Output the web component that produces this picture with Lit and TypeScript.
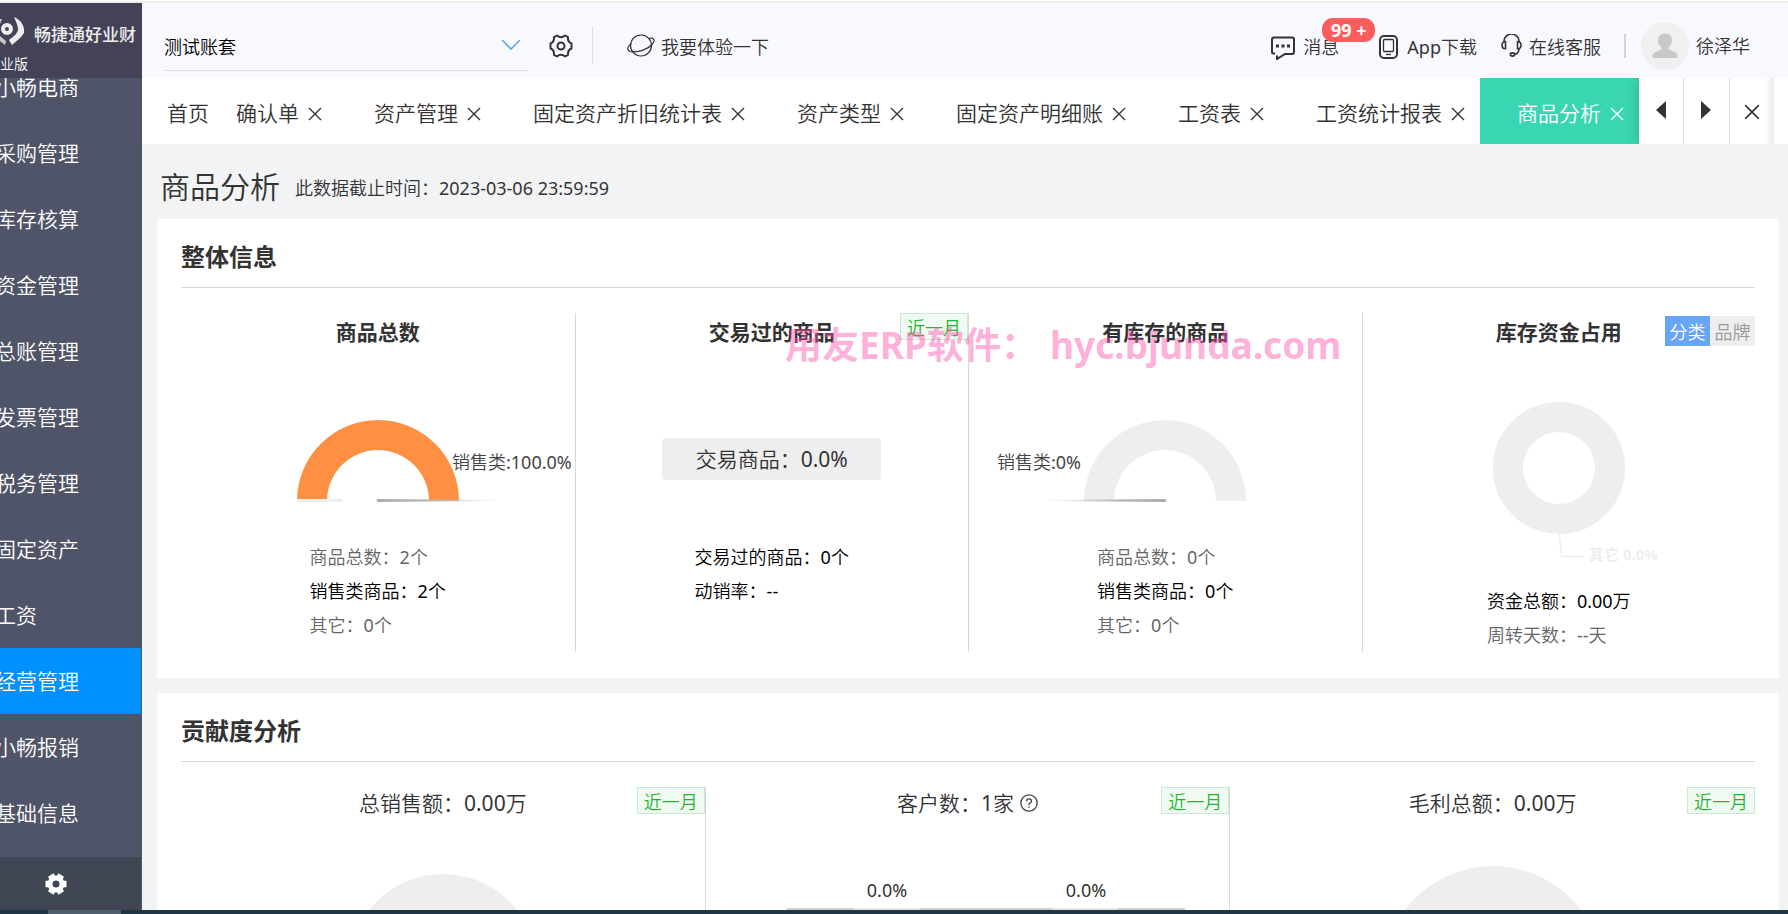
import { LitElement, html, svg, css, nothing } from "lit";
import { customElement, property, state } from "lit/decorators.js";
import { classMap } from "lit/directives/class-map.js";

const base = css`
  *, *::before, *::after { box-sizing: border-box; }
  ul { list-style: none; margin: 0; padding: 0; }
  h1, h2, h3, p { margin: 0; }
  button { font: inherit; color: inherit; background: none; border: 0; margin: 0; padding: 0; cursor: pointer; }
  a { color: inherit; text-decoration: none; }
  svg { display: block; flex: none; }
  .heavy { font-family: "Noto Sans", "Noto Sans CJK SC", sans-serif; font-weight: 700; }
`;

const cross = (size: number) => svg`<svg width=${size} height=${size} viewBox="0 0 14 14" aria-hidden="true">
  <path d="M1 1 13 13M13 1 1 13" fill="none" stroke="currentColor" stroke-width="1.4"/></svg>`;

@customElement("side-nav")
class SideNav extends LitElement {
  static styles = [base, css`
    :host { display: flex; flex-direction: column; width: 142px; flex: none; background: #4f5468; color: #fff; min-height: 0; }
    .brand { height: 75px; flex: none; background: #444256; overflow: hidden; }
    .logo { display: flex; align-items: center; gap: 10px; height: 51px; padding-top: 4px; }
    .name { font-family: "Noto Sans", "Noto Sans CJK SC", sans-serif; font-size: 17px; line-height: 24px; padding-top: 8px; font-weight: 500; white-space: nowrap; color: #eee; }
    .edition { font-size: 14px; line-height: 20px; }
    .menu { flex: 1; min-height: 0; overflow: hidden; display: flex; flex-direction: column; }
    .menu ul { margin-top: -24px; }
    .link { display: block; width: 141px; height: 66px; line-height: 66px; font-size: 21px; white-space: nowrap; overflow: hidden; }
    .link span { margin-left: -5px; }
    .link.on { background: #0090ff; }
    .foot { height: 53px; flex: none; width: 141px; background: #404553; display: flex; align-items: center; padding-left: 45px; }
  `];
  @state() current = "经营管理";
  items = ["小畅电商", "采购管理", "库存核算", "资金管理", "总账管理", "发票管理", "税务管理", "固定资产", "工资", "经营管理", "小畅报销", "基础信息"];
  render() {
    return html`
      <div class="brand">
        <div class="logo">
          <svg width="24" height="30" viewBox="0 0 24 30" aria-hidden="true">
            <circle cx="7" cy="13" r="4" fill="none" stroke="#f0f0f2" stroke-width="4"/>
            <path d="M14 1C21 4 25 10 24 17 21 22 16 25 12 29L9 24C13 21 17 18 18 14 18 9 16 6 14 1Z" fill="#ececf0"/>
            <path d="M0 20 6 25 5 29 0 25ZM0 3 2 3 0 8Z" fill="#c8c8d0"/>
          </svg>
          <span class="name">畅捷通好业财</span>
        </div>
        <div class="edition">业版</div>
      </div>
      <nav class="menu"><ul>
        ${this.items.map((t) => html`<li><a href="#" class=${classMap({ link: true, on: t === this.current })}
          @click=${(e: Event) => { e.preventDefault(); this.current = t; }}><span>${t}</span></a></li>`)}
      </ul></nav>
      <div class="foot">
        <button aria-label="设置">
          <svg width="22" height="22" viewBox="0 0 22 22" aria-hidden="true">
            <circle cx="11" cy="11" r="8.500" fill="#fff"/>
            <path d="M.5 11H21.500M5.750 2 16.250 20M16.250 2 5.750 20" stroke="#fff" stroke-width="6.500"/>
            <circle cx="11" cy="11" r="3.500" fill="#404553"/>
          </svg>
        </button>
      </div>`;
  }
}

@customElement("top-bar")
class TopBar extends LitElement {
  static styles = [base, css`
    :host { display: flex; justify-content: space-between; height: 75px; flex: none; background: #f8f9fe; color: #333; font-size: 18px; line-height: 26px; white-space: nowrap; }
    .left, .right { display: flex; align-items: flex-start; }
    .book { position: relative; width: 365px; margin-left: 22px; height: 68px; padding-top: 20px; border-bottom: 1px solid #dcdde1; }
    .book select { appearance: none; width: 100%; height: 48px; border: 0; padding: 0; background: none; font: inherit; color: #000; outline: 0; }
    .chev { position: absolute; right: 8px; top: 36px; pointer-events: none; }
    .gear { margin: 31px 0 0 20px; }
    .rule { width: 1px; height: 38px; margin: 23px 0 0 19px; background: #dcdde1; }
    .item { display: flex; align-items: center; height: 26px; margin-top: 31px; position: relative; }
    .try { margin-left: 34px; gap: 6px; }
    .msg { gap: 8px; }
    .app { gap: 9px; margin-left: 40px; }
    .help { gap: 7px; margin-left: 24px; }
    .badge { position: absolute; left: 51px; top: -16px; width: 53px; height: 24px; border-radius: 11px; background: #ff5c5e; color: #fff; line-height: 24px; text-align: center; }
    .bar { width: 2px; height: 24px; background: #d2d3d6; margin: 31px 15px 0 23px; }
    .user { display: flex; align-items: center; gap: 7px; margin: 19px 38px 0 0; height: 48px; }
  `];
  render() {
    return html`
      <div class="left">
        <div class="book">
          <select aria-label="账套"><option>测试账套</option></select>
          <svg class="chev" width="20" height="12" viewBox="0 0 20 12" aria-hidden="true"><path d="M1 1 10 10 19 1" fill="none" stroke="#68a5f5" stroke-width="1.600"/></svg>
        </div>
        <button class="gear" aria-label="系统设置">
          <svg width="24" height="24" viewBox="0 0 24 24" fill="none" stroke="#333" stroke-width="2" stroke-linejoin="round" aria-hidden="true">
            <path d="M8 1.500Q12 5 16 1.500L19 3.200Q18.500 8 22.500 9.500V14.500Q18.500 16 19 20.800L16 22.500Q12 19 8 22.500L5 20.800Q5.500 16 1.500 14.500V9.500Q5.500 8 5 3.200Z"/><circle cx="12" cy="12" r="3.500"/>
          </svg>
        </button>
        <div class="rule"></div>
        <a class="item try" href="#">
          <svg width="28" height="26" viewBox="0 0 28 26" fill="none" stroke="#333" stroke-width="1.200" aria-hidden="true">
            <circle cx="14" cy="11.500" r="10.500"/>
            <path d="M4.500 9.500C0 12.500-.5 16 3 17.500 9 19 20 16 25.500 10 29 5.500 26 3.500 22 4.500"/>
          </svg>
          <span>我要体验一下</span>
        </a>
      </div>
      <div class="right">
        <a class="item msg" href="#">
          <svg width="24" height="26" viewBox="0 0 24 26" fill="none" stroke="#333" stroke-width="2" aria-hidden="true">
            <path d="M4 19.500H2.500Q1 19.500 1 18V5.500Q1 3.500 3 3.500H21Q23 3.500 23 5.500V18Q23 20 21 20H14L6 25V21.500"/>
            <path d="M5 12h3M10.500 12h3M16 12h3" stroke-width="3"/>
          </svg>
          <span>消息</span><span class="badge heavy">99 +</span>
        </a>
        <a class="item app" href="#">
          <svg width="19" height="26" viewBox="0 0 19 26" fill="none" stroke="#333" aria-hidden="true">
            <rect x="1" y="2" width="17" height="22" rx="4" stroke-width="2"/>
            <rect x="4.500" y="5.500" width="10" height="12" rx="1" stroke-width="1.300"/><path d="M7 20.500h5" stroke-width="1.300"/>
          </svg>
          <span>App下载</span>
        </a>
        <a class="item help" href="#">
          <svg width="21" height="26" viewBox="0 0 21 26" fill="none" stroke="#333" stroke-width="1.600" aria-hidden="true">
            <path d="M3 8V7A7.500 7 0 0 1 18 7V8M18 14.500Q18 19.500 13.500 20.500"/>
            <path d="M4.500 7.500Q1 7.500 1 11.200 1 14.800 4.500 14.800ZM16.500 7.500Q20 7.500 20 11.200 20 14.800 16.500 14.800Z"/><ellipse cx="11.500" cy="20.500" rx="2.200" ry="1.600"/>
          </svg>
          <span>在线客服</span>
        </a>
        <div class="bar"></div>
        <a class="user" href="#">
          <svg width="48" height="48" viewBox="0 0 48 48" aria-hidden="true">
            <circle cx="24" cy="24" r="24" fill="#f0f0f0"/>
            <path fill="#c8c8c8" d="M24 11.500C28 11.500 31 14 31 18.500 31 22 29 24 27.500 26V27.500C31 29 36 30 36.500 33.500V36H11.500V33.500C12 30 17 29 20.500 27.500V26C19 24 17 22 17 18.500 17 14 20 11.500 24 11.500Z"/>
          </svg>
          <span>徐泽华</span>
        </a>
      </div>`;
  }
}

@customElement("tab-strip")
class TabStrip extends LitElement {
  static styles = [base, css`
    :host { display: flex; height: 66px; flex: none; background: #fff; color: #333; font-size: 21px; line-height: 30px; white-space: nowrap; }
    .tabs { display: flex; flex: 1; min-width: 0; overflow: hidden; }
    .home { display: flex; align-items: center; padding-left: 25px; width: 57px; flex: none; }
    .label { padding-top: 4px; flex: none; }
    .tab { display: flex; align-items: center; flex: none; padding: 0 15px 0 37px; gap: 9px; }
    .close { display: flex; padding-top: 5px; }
    .tab.on { background: #3ad6b2; color: #fff; }
    .ctrl { display: flex; flex: none; margin-right: 14px; width: 135px; box-shadow: 0 0 14px rgba(0, 0, 0, 0.2); clip-path: inset(0 0 0 -14px); position: relative; background: #fff; }
    .ctrl button { flex: 1; display: flex; justify-content: center; align-items: center; padding-bottom: 2px; }
    .ctrl button + button { border-left: 1px solid #dcdcdc; }
    .ctrl button:last-child { background: linear-gradient(270deg, #ececec, #fff 10px); padding: 2px 0 0; }
  `];
  @state() current = "商品分析";
  tabs = ["确认单", "资产管理", "固定资产折旧统计表", "资产类型", "固定资产明细账", "工资表", "工资统计报表", "商品分析"];
  render() {
    return html`
      <div class="tabs">
        <div class="home"><button class="label">首页</button></div>
        ${this.tabs.map((t) => html`<div class=${classMap({ tab: true, on: t === this.current })}>
          <button class="label" @click=${() => (this.current = t)}>${t}</button>
          <button class="close" aria-label="关闭${t}">${cross(14)}</button>
        </div>`)}
      </div>
      <div class="ctrl">
        <button aria-label="向左"><svg width="10" height="18" viewBox="0 0 10 18"><path d="M10 0V18L0 9Z" fill="#333"/></svg></button>
        <button aria-label="向右"><svg width="10" height="18" viewBox="0 0 10 18"><path d="M0 0V18L10 9Z" fill="#333"/></svg></button>
        <button aria-label="全部关闭">${cross(16)}</button>
      </div>`;
  }
}

@customElement("half-gauge")
class HalfGauge extends LitElement {
  static styles = [base, css`
    :host { display: flex; justify-content: center; }
    text { font-size: 18px; fill: #444; }
  `];
  @property({ type: Boolean }) full = false;
  @property() label = "";
  render() {
    return html`<svg width="392" height="192" viewBox="0 -1 392 192" role="img" aria-label=${this.label}>
      <defs><linearGradient id="n" x1="0" x2="1"><stop offset="0" stop-color="#aaa"/><stop offset=".4" stop-color="#b8b8b8"/><stop offset="1" stop-color="#ccc" stop-opacity="0"/></linearGradient></defs>
      <path d="M115 152A81 81 0 0 1 277 152H247A51 51 0 0 0 145 152Z" fill=${this.full ? "#ff8f42" : "#eee"}/>
      ${this.full ? svg`<rect x="115" y="150" width="45" height="3" fill="#eee"/>` : nothing}
      <g transform=${this.full ? "" : "translate(392 0) scale(-1 1)"}><path d="M196 150 318 151V152L196 153Q193 151.500 196 150Z" fill="url(#n)"/></g>
      <text x=${this.full ? 270 : 112} y="120" text-anchor=${this.full ? "start" : "end"}>${this.label}</text>
    </svg>`;
  }
}

@customElement("overview-card")
class OverviewCard extends LitElement {
  static styles = [base, css`
    :host { display: block; position: relative; background: #fff; padding: 0 24px 26px; color: #333; }
    h2 { font-size: 24px; line-height: 32px; padding: 22px 0 14px; border-bottom: 1px solid #d6dada; }
    .cols { display: grid; grid-template-columns: repeat(4, 1fr); margin-top: 25px; }
    .col { position: relative; min-height: 339px; padding-top: 3px; border-left: 1px solid #d8d8d8; min-width: 0; }
    .col:first-child { border: 0; }
    h3 { font-size: 21px; line-height: 32px; text-align: center; }
    .facts { width: fit-content; margin: 0 auto; font-size: 18px; line-height: 34px; color: #666; white-space: nowrap; }
    .facts .strong { color: #000; }
    .tag { position: absolute; right: 0; top: 0; height: 27px; width: 68px; border: 1px solid #c5ecce; background: #f0f9f2; color: #1eb82e; font-size: 18px; line-height: 22px; padding-top: 3px; }
    .switch { position: absolute; right: 0; top: 3px; display: flex; font-size: 18px; line-height: 28px; }
    .switch button { width: 45px; height: 30px; padding-top: 2px; background: #eee; color: #999; }
    .switch .on { background: #68a5f5; color: #fff; }
    .mid { height: 192px; padding-top: 90px; display: flex; justify-content: center; align-items: flex-start; }
    .pill { width: 219px; height: 42px; border-radius: 4px; background: #eee; font-size: 21px; line-height: 42px; text-align: center; }
    .donut { display: flex; justify-content: center; }
    .donut text { font-size: 15px; fill: #eee; }
    .mark { position: absolute; left: 628px; top: 104px; display: flex; align-items: baseline; gap: 12px; font-size: 37px; line-height: 44px; color: rgba(255, 80, 170, 0.46); white-space: nowrap; pointer-events: none; }
  `];
  @state() mode = "分类";
  render() {
    return html`
      <h2 class="heavy">整体信息</h2>
      <div class="cols">
        <div class="col">
          <h3 class="heavy">商品总数</h3>
          <half-gauge full label="销售类:100.0%"></half-gauge>
          <ul class="facts"><li>商品总数：2个</li><li class="strong">销售类商品：2个</li><li>其它：0个</li></ul>
        </div>
        <div class="col">
          <h3 class="heavy">交易过的商品</h3>
          <button class="tag">近一月</button>
          <div class="mid"><div class="pill">交易商品：0.0%</div></div>
          <ul class="facts"><li class="strong">交易过的商品：0个</li><li class="strong">动销率：--</li></ul>
        </div>
        <div class="col">
          <h3 class="heavy">有库存的商品</h3>
          <half-gauge label="销售类:0%"></half-gauge>
          <ul class="facts"><li>商品总数：0个</li><li class="strong">销售类商品：0个</li><li>其它：0个</li></ul>
        </div>
        <div class="col">
          <h3 class="heavy">库存资金占用</h3>
          <div class="switch">${["分类", "品牌"].map((m) => html`<button class=${classMap({ on: m === this.mode })} @click=${() => (this.mode = m)}>${m}</button>`)}</div>
          <div class="donut">
            <svg width="392" height="236" viewBox="0 -1 392 236">
              <circle cx="196" cy="119" r="51" fill="none" stroke="#eee" stroke-width="30"/>
              <path d="M196 185 199 207.500H221" fill="none" stroke="#eee" stroke-width="1.500"/>
              <text class="heavy" x="226" y="211">其它 0.0%</text>
            </svg>
          </div>
          <ul class="facts"><li class="strong">资金总额：0.00万</li><li>周转天数：--天</li></ul>
        </div>
      </div>
      <div class="mark heavy"><span>用友ERP软件：</span><span>hyc.bjunda.com</span></div>`;
  }
}

@customElement("share-card")
class ShareCard extends LitElement {
  static styles = [base, css`
    :host { display: flex; flex-direction: column; background: #fff; padding: 0 24px; color: #333; overflow: hidden; min-height: 0; }
    h2 { font-size: 24px; line-height: 32px; padding: 22px 0 14px; border-bottom: 1px solid #d6dada; flex: none; }
    .cols { display: grid; grid-template-columns: repeat(3, 1fr); margin-top: 25px; flex: none; height: 339px; }
    .col { position: relative; border-right: 1px solid #d8d8d8; min-width: 0; }
    .col:last-child { border: 0; }
    h3 { display: flex; justify-content: center; align-items: center; gap: 6px; font-size: 21px; line-height: 32px; font-weight: inherit; }
    .tag { position: absolute; right: 0; top: 0; height: 27px; width: 68px; border: 1px solid #c5ecce; background: #f0f9f2; color: #1eb82e; font-size: 18px; line-height: 22px; padding-top: 3px; }
    .ring { display: flex; justify-content: center; padding-top: 55px; }
    .ring.big { padding-top: 47px; }
    .bars { display: grid; grid-template-columns: 1fr 1fr; width: 398px; margin: 57px auto 0; font-size: 18px; line-height: 28px; text-align: center; }
    .mid { padding-left: 38px; }
    .bar { height: 60px; margin-top: 4px; background: linear-gradient(90deg, #ccd0cf 67px, #e4e4e4 67px 133px, #ccd0cf 133px); }
    .bar.rev { background: linear-gradient(90deg, #ccd0cf 66px, #e4e4e4 66px 132px, #ccd0cf 132px); }
  `];
  ring(r: number) {
    return html`<svg width=${r * 2} height=${r * 2} viewBox="0 0 ${r * 2} ${r * 2}"><circle cx=${r} cy=${r} r=${r - 22} fill="none" stroke="#eee" stroke-width="44"/></svg>`;
  }
  render() {
    return html`
      <h2 class="heavy">贡献度分析</h2>
      <div class="cols">
        <div class="col"><h3>总销售额：0.00万</h3><button class="tag">近一月</button><div class="ring">${this.ring(94)}</div></div>
        <div class="col">
          <h3>客户数：1家
            <svg width="18" height="18" viewBox="0 0 18 18" fill="none" stroke="#444" stroke-width="1.300" aria-label="说明"><circle cx="9" cy="9" r="8.200"/><path d="M6.500 7.200Q6.500 4.800 9 4.800T11.500 7Q11.500 8.200 10.200 8.800T9 10.500V11M9 12.300V13.700"/></svg>
          </h3>
          <button class="tag">近一月</button>
          <div class="mid"><div class="bars"><div>0.0%<div class="bar"></div></div><div>0.0%<div class="bar rev"></div></div></div></div>
        </div>
        <div class="col"><h3>毛利总额：0.00万</h3><button class="tag">近一月</button><div class="ring big">${this.ring(110)}</div></div>
      </div>`;
  }
}

@customElement("app-root")
class AppRoot extends LitElement {
  static styles = [base, css`
    :host { display: flex; flex-direction: column; height: 100vh; overflow: hidden; font-family: "Noto Sans", "Noto Sans CJK SC DemiLight", "Noto Sans CJK SC", sans-serif; font-weight: 400; background: #f2f3f5; color: #333; }
    .edge { height: 3px; flex: none; background: #eee; border-top: 1px solid #fff; }
    .body { display: flex; flex: 1; min-height: 0; }
    .main { display: flex; flex-direction: column; flex: 1; min-width: 0; min-height: 0; }
    .page { display: flex; flex-direction: column; flex: 1; min-height: 0; padding: 0 9px 0 15px; overflow: hidden; }
    .title { display: flex; align-items: center; gap: 15px; height: 75px; flex: none; padding: 10px 0 0 3px; white-space: nowrap; }
    .title h1 { font-size: 30px; line-height: 44px; font-weight: inherit; }
    .title span { font-size: 18px; }
    overview-card { flex: none; margin-bottom: 15px; }
    share-card { flex: 1; }
    .dock { height: 4px; flex: none; background: #213645; padding-left: 48px; }
    .dock div { width: 73px; height: 4px; background: #4f5f6c; }
  `];
  render() {
    return html`
      <div class="edge"></div>
      <div class="body">
        <side-nav></side-nav>
        <div class="main">
          <top-bar></top-bar>
          <tab-strip></tab-strip>
          <main class="page">
            <div class="title"><h1>商品分析</h1><span>此数据截止时间：2023-03-06 23:59:59</span></div>
            <overview-card></overview-card>
            <share-card></share-card>
          </main>
        </div>
      </div>
      <div class="dock"><div></div></div>`;
  }
}
